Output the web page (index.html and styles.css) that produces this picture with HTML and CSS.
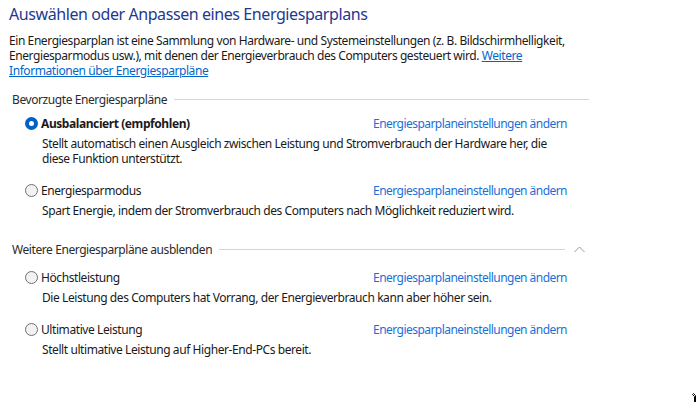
FILE: index.html
```html
<!DOCTYPE html>
<html lang="de">
<head>
    <meta charset="UTF-8">
    <title>Energieoptionen</title>
    <link rel="stylesheet" href="styles.css">
</head>
<body>
    <div class="page">
        <h1>Auswählen oder Anpassen eines Energiesparplans</h1>
        <p class="intro">Ein Energiesparplan ist eine Sammlung von Hardware- und Systemeinstellungen (z. B. Bildschirmhelligkeit, Energiesparmodus usw.), mit denen der Energieverbrauch des Computers gesteuert wird. <a href="#">Weitere Informationen über Energiesparpläne</a></p>

        <!-- Preferred plans -->
        <div class="group">
            <div class="group-head"><span>Bevorzugte Energiesparpläne</span><i class="rule"></i></div>

            <div class="plan">
                <div class="plan-row">
                    <label class="radio checked"><span class="dot"></span><b>Ausbalanciert (empfohlen)</b></label>
                    <a href="#">Energiesparplaneinstellungen ändern</a>
                </div>
                <div class="desc">Stellt automatisch einen Ausgleich zwischen Leistung und Stromverbrauch der Hardware her, die diese Funktion unterstützt.</div>
            </div>

            <div class="plan">
                <div class="plan-row">
                    <label class="radio"><span class="dot"></span>Energiesparmodus</label>
                    <a href="#">Energiesparplaneinstellungen ändern</a>
                </div>
                <div class="desc">Spart Energie, indem der Stromverbrauch des Computers nach Möglichkeit reduziert wird.</div>
            </div>
        </div>

        <!-- Additional plans -->
        <div class="group more">
            <div class="group-head"><span>Weitere Energiesparpläne ausblenden</span><i class="rule"></i>
                <svg class="chevron" width="11" height="7" viewBox="0 0 11 7"><path d="M0.5 6 L5.5 1 L10.5 6" fill="none" stroke="#9a9a9a" stroke-width="1"/></svg>
            </div>

            <div class="plan">
                <div class="plan-row">
                    <label class="radio"><span class="dot"></span>Höchstleistung</label>
                    <a href="#">Energiesparplaneinstellungen ändern</a>
                </div>
                <div class="desc">Die Leistung des Computers hat Vorrang, der Energieverbrauch kann aber höher sein.</div>
            </div>

            <div class="plan">
                <div class="plan-row">
                    <label class="radio"><span class="dot"></span>Ultimative Leistung</label>
                    <a href="#">Energiesparplaneinstellungen ändern</a>
                </div>
                <div class="desc">Stellt ultimative Leistung auf Higher-End-PCs bereit.</div>
            </div>
        </div>
    </div>

    <!-- mouse pointer left in the corner -->
    <svg class="pointer" width="6" height="10" viewBox="0 0 6 10"><path d="M3.5 10 V3.5 L1.5 1.5 L0.5 2.5 L2.5 4.5 V10" fill="none" stroke="#000" stroke-width="1"/></svg>
</body>
</html>
```

FILE: styles.css
```css
body {
    margin: 0;
    background-color: #ffffff;
    color: #1a1a1a;
    font-family: "Noto Sans", "Open Sans", sans-serif;
    font-size: 12px;
    line-height: 15px;
    letter-spacing: -0.035em;
}
a {
    color: #0066cc;
}
.page {
    padding: 4px 9px 0 9px;
    width: 580px;
}
h1 {
    margin: 0;
    font-size: 16px;
    line-height: 20px;
    font-weight: normal;
    color: #1e3991;
}
.intro {
    margin: 9px 0 0 0;
    width: 566px;
}
.group {
    margin-top: 14px;
}
.group-head {
    display: flex;
    align-items: center;
    gap: 7px;
    padding-left: 3px;
    height: 15px;
    color: #2b2b2b;
}
.group-head .rule {
    flex: 1;
    height: 1px;
    background-color: #d5d5d5;
}
.plan {
    padding-left: 16px;
    width: 542px;
    margin-top: 9px;
}
.plan + .plan {
    margin-top: 17px;
}
.more .group-head + .plan {
    margin-top: 13px;
}
.plan-row {
    display: flex;
    justify-content: space-between;
    align-items: center;
    height: 15px;
}
.plan-row a {
    color: #1a6fd8;
    text-decoration: none;
    letter-spacing: -0.045em;
}
.radio {
    display: flex;
    align-items: center;
    gap: 3px;
}
.radio b {
    font-weight: bold;
}
.dot {
    width: 13px;
    height: 13px;
    border: 1px solid #707070;
    border-radius: 50%;
    background-color: #f2f2f2;
    box-sizing: border-box;
}
.radio.checked .dot {
    border: 4px solid #0060c8;
    background-color: #ffffff;
}
.desc {
    margin-top: 5px;
    padding-left: 17px;
}
.more {
    margin-top: 24px;
}
.more .group-head {
    width: 573px;
}
.chevron {
    margin-left: 2px;
}
.pointer {
    position: absolute;
    left: 692px;
    top: 392px;
}
```
